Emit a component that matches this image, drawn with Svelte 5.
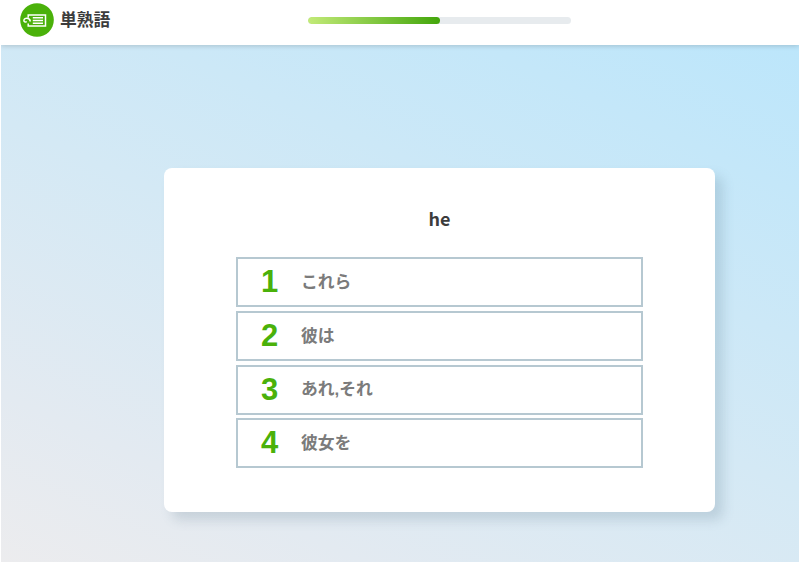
<script>
  const word = 'he';
  const progress = 50;
  const choices = ['これら', '彼は', 'あれ,それ', '彼女を'];
</script>

<div class="app">
  <header>
    <div class="brand">
      <svg width="34" height="34" viewBox="0 0 34 34" fill="none" stroke="#fff">
        <circle cx="17" cy="17" r="16.8" fill="#4ab10a" stroke="none" />
        <path d="M8.2 14.8V12H25.5V23H8.2V20.5" stroke-width="1.5" />
        <path d="M12.8 14.8H23M12.8 17.5H23M12.8 20.2H23" stroke-width="1.4" />
        <path d="M10.2 18.4C10.2 14.6 4.2 14.2 3.9 17.2C3.8 18.9 5.3 19.4 6.8 18.6" stroke-width="1.5" />
      </svg>
      <h1>単熟語</h1>
    </div>
    <div class="track"><div class="fill" style="width: {progress}%"></div></div>
  </header>
  <main>
    <section class="card">
      <h2>{word}</h2>
      <ol>
        {#each choices as choice, i}
          <li><button><span class="num">{i + 1}</span><span class="label">{choice}</span></button></li>
        {/each}
      </ol>
    </section>
  </main>
</div>

<style>
  :global(body) { margin: 0; background: #fff; }
  .app {
    box-sizing: border-box;
    width: 800px;
    height: 563px;
    padding: 0 1px 1px;
    display: flex;
    flex-direction: column;
    overflow: hidden;
    font-family: "Noto Sans CJK JP", sans-serif;
    color: #3c3c3c;
  }
  header {
    position: relative;
    z-index: 1;
    display: flex;
    align-items: flex-start;
    height: 44.6px;
    flex: none;
    background: #fff;
    box-shadow: 0 1px 5px rgba(0, 0, 0, 0.17);
    clip-path: inset(0 0 -10px 0);
  }
  .brand {
    display: flex;
    align-items: center;
    width: 288px;
    padding: 3px 0 0 19px;
  }
  .brand svg { flex: none; }
  h1 {
    margin: -3px 0 0 6px;
    font-size: 16.8px;
    line-height: 34px;
    font-weight: 700;
  }
  .track {
    width: 263px;
    height: 7px;
    margin-top: 16.6px;
    border-radius: 4px;
    background: #e7ebee;
    overflow: hidden;
  }
  .fill {
    height: 100%;
    border-radius: 4px;
    background: linear-gradient(90deg, #c2ea78, #43a60b);
  }
  main {
    flex: 1;
    display: flex;
    justify-content: center;
    align-items: flex-start;
    padding: 123.4px 0 0 79px;
    background: linear-gradient(25deg, #ececee, #e3eaf1 19%, #d4e9f5 50%, #bce6fb);
  }
  .card {
    box-sizing: border-box;
    width: 551px;
    height: 344px;
    padding: 33px 72px 0;
    border-radius: 8px;
    background: #fff;
    box-shadow: 8px 8px 12px rgba(80, 110, 130, 0.2);
  }
  h2 {
    margin: 0;
    font-size: 18px;
    line-height: 34px;
    font-weight: 700;
    text-align: center;
  }
  ol {
    list-style: none;
    margin: 22.5px 0 0;
    padding: 0;
    display: flex;
    flex-direction: column;
    gap: 3.6px;
  }
  button {
    box-sizing: border-box;
    display: flex;
    align-items: center;
    width: 407px;
    height: 50px;
    padding: 0 0 0 23px;
    border: 2px solid #b6c8d1;
    background: #fff;
    font: inherit;
    text-align: left;
  }
  .num {
    width: 40px;
    color: #4ab10a;
    font: 700 31px/46px "Liberation Sans", sans-serif;
  }
  .label {
    margin-top: 1px;
    color: #7b7b7b;
    font-family: "Liberation Sans", "Noto Sans CJK JP", sans-serif;
    font-size: 16.8px;
    font-weight: 700;
    line-height: 46px;
  }
</style>
